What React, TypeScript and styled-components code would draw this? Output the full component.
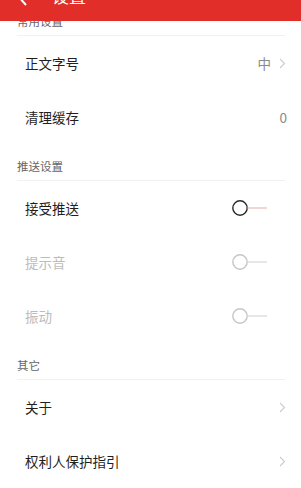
import React from "react";
import styled, { createGlobalStyle } from "styled-components";

const GlobalStyle = createGlobalStyle`
  html, body { margin: 0; padding: 0; background: #ffffff; }
  body { font-family: "Noto Sans CJK SC", "Noto Sans", sans-serif; }
  * { box-sizing: border-box; }
`;

const Page = styled.div`
  position: relative;
  width: 301px;
  height: 488px;
  overflow: hidden;
  background: #ffffff;
`;

const TitleBar = styled.div`
  position: absolute;
  top: 0;
  left: 0;
  right: 0;
  height: 21px;
  background: #e12e28;
  overflow: hidden;
  display: flex;
  align-items: flex-end;
  z-index: 2;
`;

const TitleInner = styled.div`
  flex-shrink: 0;
  width: 100%;
  height: 50px;
  display: flex;
  align-items: center;
  padding-left: 15px;
`;

const BackIcon = styled.svg`
  width: 14px;
  height: 20px;
  flex-shrink: 0;
`;

const Title = styled.span`
  margin-left: 23px;
  color: #ffffff;
  font-size: 17px;
  line-height: 20px;
  font-weight: 400;
`;

const Content = styled.div`
  margin-top: -1px;
  display: flex;
  flex-direction: column;
`;

const SectionHeader = styled.div`
  height: 37px;
  margin: 0 16px 0 17px;
  border-bottom: 1px solid #f1f1f1;
  display: flex;
  align-items: flex-end;
  padding-bottom: 8px;
`;

const SectionLabel = styled.span`
  font-size: 11.5px;
  line-height: 12px;
  color: #666666;
`;

const Row = styled.div`
  height: 54px;
  padding: 0 14px 0 25px;
  display: flex;
  align-items: center;
  justify-content: space-between;
`;

const RowLabel = styled.span<{ $disabled?: boolean }>`
  font-size: 13.5px;
  line-height: 16px;
  color: ${(p) => (p.$disabled ? "#bcbcbc" : "#1f1f1f")};
`;

const RowRight = styled.div`
  display: flex;
  align-items: center;
  gap: 8px;
`;

const Value = styled.span`
  font-size: 13.5px;
  line-height: 16px;
  color: #8a8a8a;
`;

const Chevron = styled.svg`
  width: 7px;
  height: 11px;
  margin-right: 1px;
`;

const ToggleSvg = styled.svg`
  width: 37px;
  height: 18px;
  margin-right: 19px;
`;

const ChevronIcon = () => (
  <Chevron viewBox="0 0 7 11">
    <polyline points="1,1 5.5,5.5 1,10" fill="none" stroke="#cccccc" strokeWidth="1.1" />
  </Chevron>
);

const Toggle = ({ active }: { active?: boolean }) => (
  <ToggleSvg viewBox="0 0 37 18">
    <circle cx="9" cy="9" r="7.2" fill="none" stroke={active ? "#2b2b2b" : "#c6c6c6"} strokeWidth="1.4" />
    <line x1="16.5" y1="9" x2="36" y2="9" stroke={active ? "#ecc4c4" : "#dddddd"} strokeWidth="1.4" />
  </ToggleSvg>
);

export default function App() {
  return (
    <Page>
      <GlobalStyle />
      <TitleBar>
        <TitleInner>
          <BackIcon viewBox="0 0 14 20">
            <polyline points="11,1 3,10 11,19" fill="none" stroke="#ffffff" strokeWidth="2" />
          </BackIcon>
          <Title>设置</Title>
        </TitleInner>
      </TitleBar>
      <Content>
        <SectionHeader>
          <SectionLabel>常用设置</SectionLabel>
        </SectionHeader>
        <Row>
          <RowLabel>正文字号</RowLabel>
          <RowRight>
            <Value>中</Value>
            <ChevronIcon />
          </RowRight>
        </Row>
        <Row>
          <RowLabel>清理缓存</RowLabel>
          <Value>0</Value>
        </Row>
        <SectionHeader>
          <SectionLabel>推送设置</SectionLabel>
        </SectionHeader>
        <Row>
          <RowLabel>接受推送</RowLabel>
          <Toggle active />
        </Row>
        <Row>
          <RowLabel $disabled>提示音</RowLabel>
          <Toggle />
        </Row>
        <Row>
          <RowLabel $disabled>振动</RowLabel>
          <Toggle />
        </Row>
        <SectionHeader>
          <SectionLabel>其它</SectionLabel>
        </SectionHeader>
        <Row>
          <RowLabel>关于</RowLabel>
          <ChevronIcon />
        </Row>
        <Row>
          <RowLabel>权利人保护指引</RowLabel>
          <ChevronIcon />
        </Row>
      </Content>
    </Page>
  );
}
